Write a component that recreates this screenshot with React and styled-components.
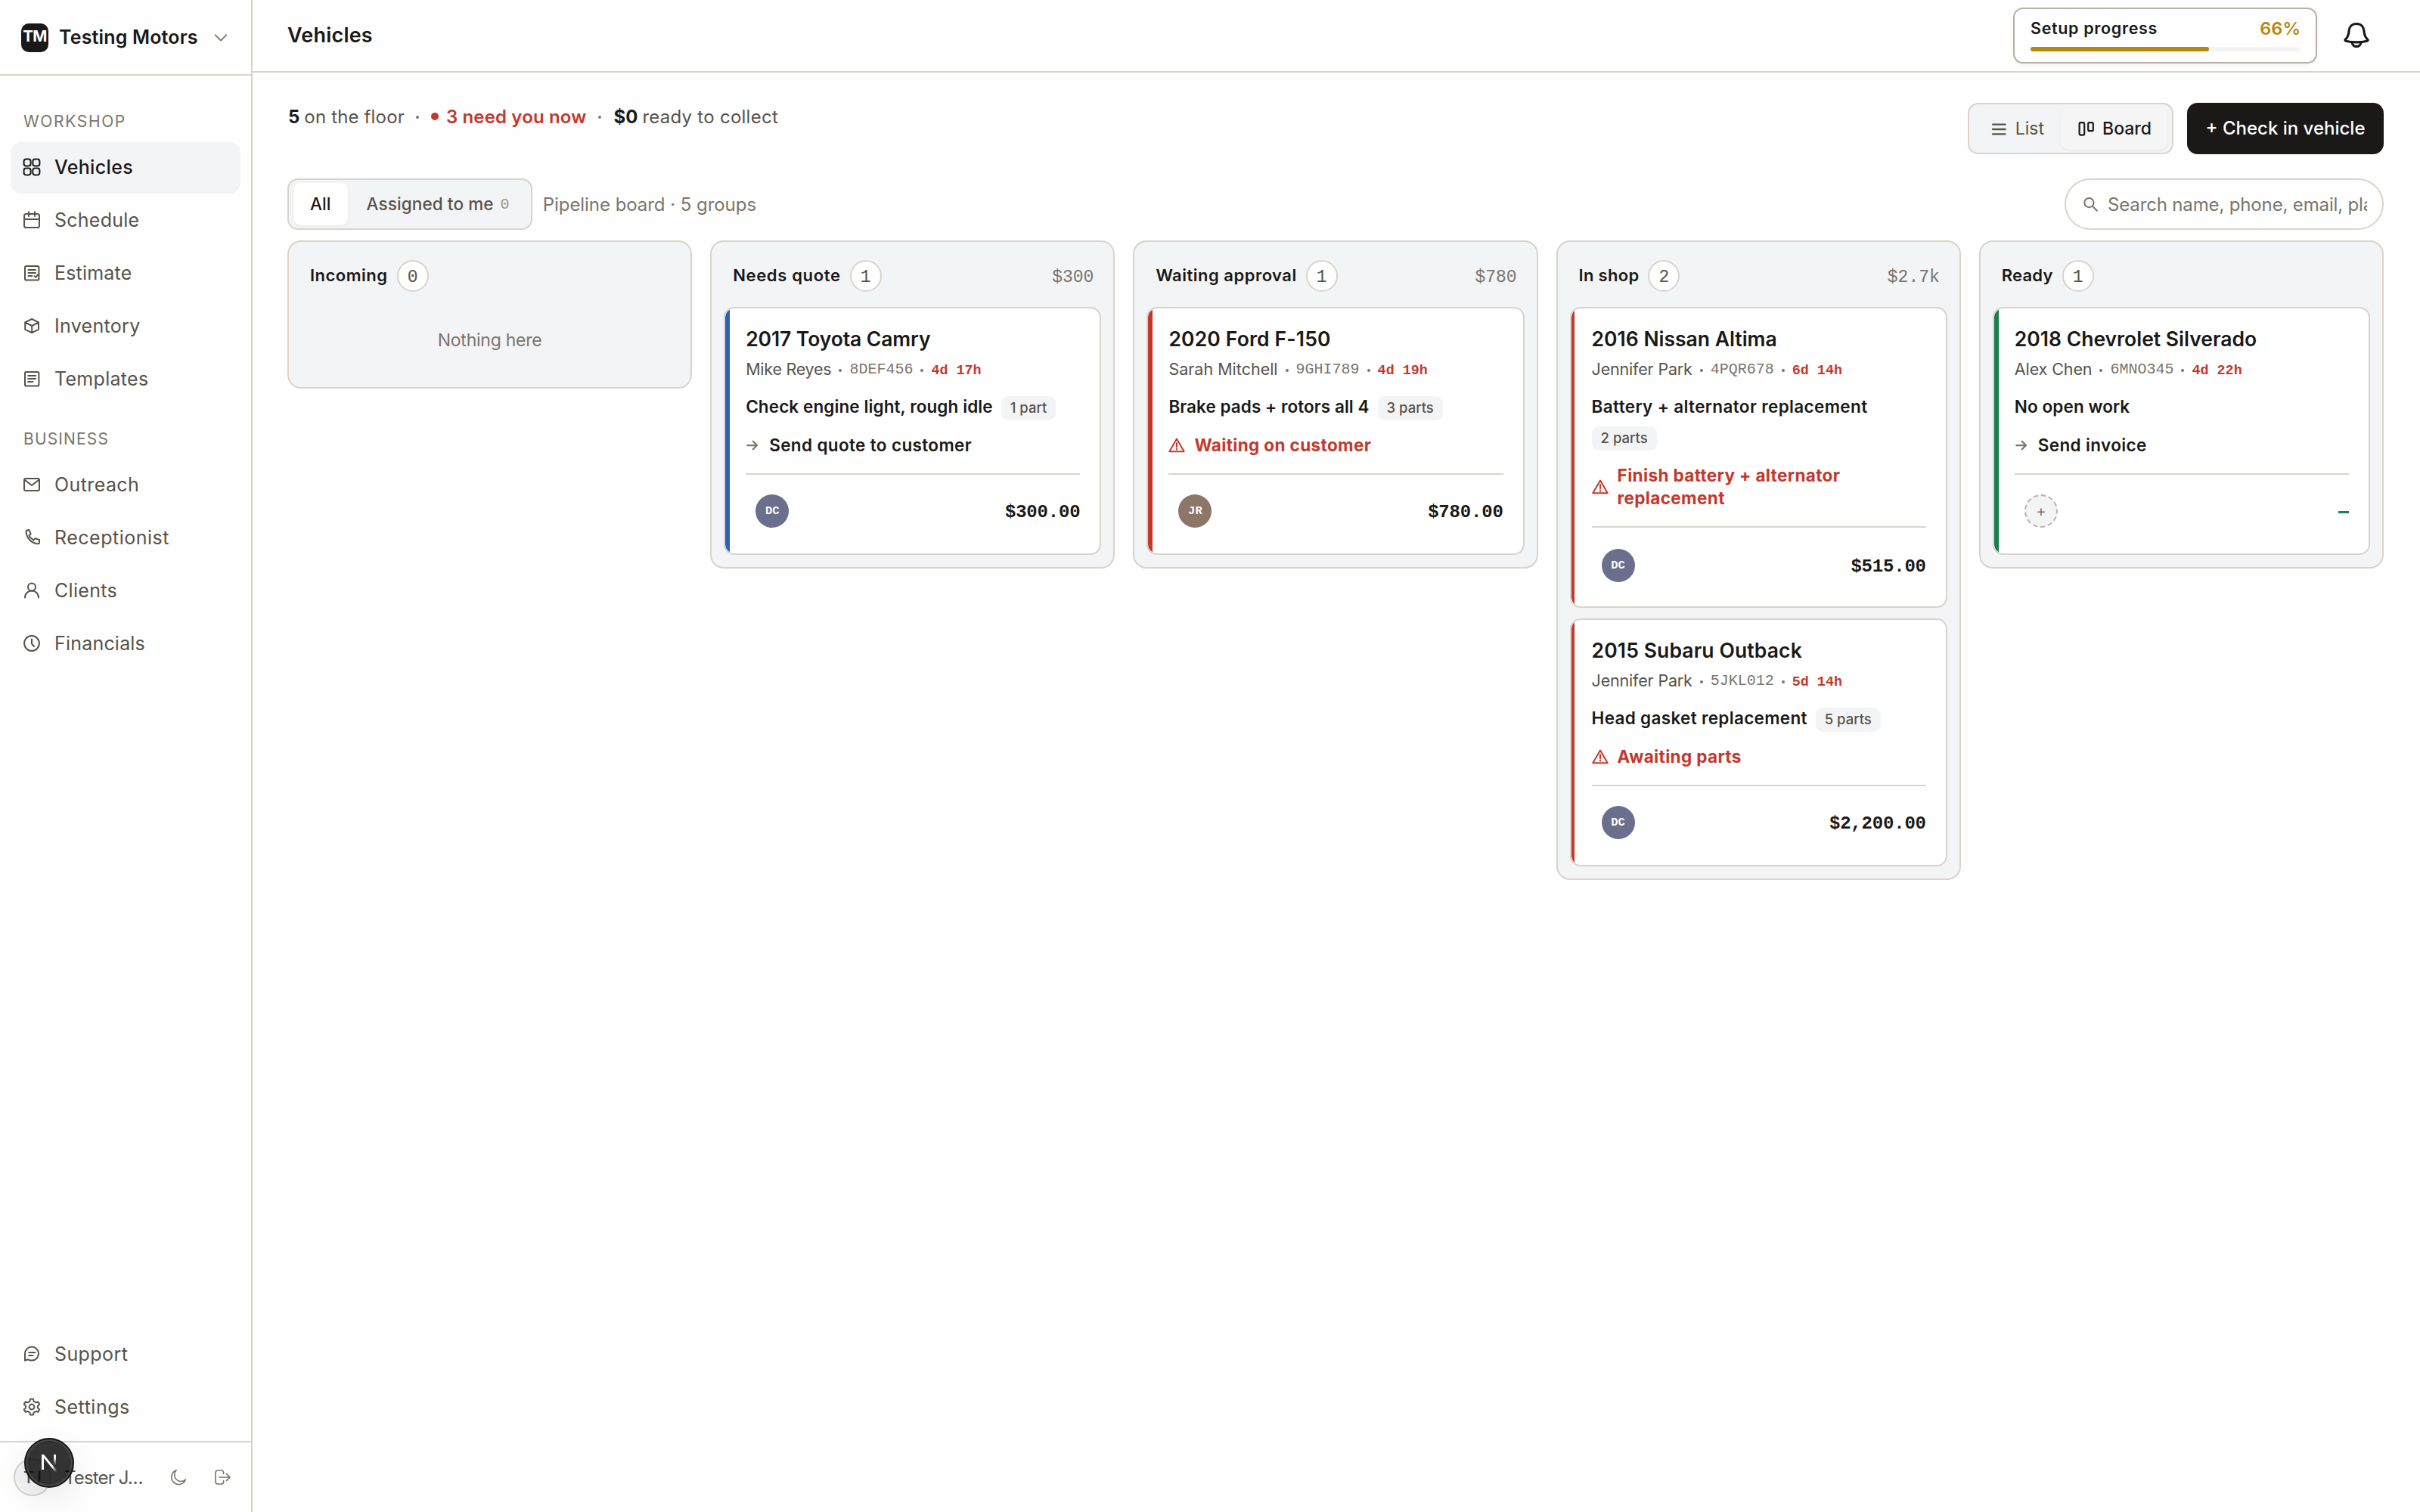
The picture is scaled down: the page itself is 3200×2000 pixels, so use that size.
import React from 'react';
import styled, { createGlobalStyle, css } from 'styled-components';

const mainNav = [
  { label: 'Vehicles', icon: 'grid', active: true, spacing: 0.34 },
  { label: 'Schedule', icon: 'calendar', spacing: 0.25 },
  { label: 'Estimate', icon: 'estimate', spacing: 0.2 },
  { label: 'Inventory', icon: 'box', spacing: 0.3 },
  { label: 'Templates', icon: 'template', spacing: 0.3 },
];

const businessNav = [
  { label: 'Outreach', icon: 'mail', spacing: 0.4 },
  { label: 'Receptionist', icon: 'phone', spacing: 0.5 },
  { label: 'Clients', icon: 'user', spacing: 0.3 },
  { label: 'Financials', icon: 'clock', spacing: 0.2 },
];

const footerNav = [
  { label: 'Support', icon: 'chat', spacing: 0.4 },
  { label: 'Settings', icon: 'gear', spacing: 0.5 },
];

const columns = [
  { title: 'Incoming', count: 0, spacing: 0.5, cards: [] },
  {
    title: 'Needs quote',
    count: 1,
    total: '$300',
    spacing: 0.65,
    cards: [
      {
        name: '2017 Toyota Camry',
        nameSpacing: -0.1,
        owner: 'Mike Reyes',
        ownerSpacing: -0.25,
        plate: '8DEF456',
        age: '4d 17h',
        job: 'Check engine light, rough idle',
        jobSpacing: 0.1,
        parts: '1 part',
        action: 'Send quote to customer',
        initials: 'DC',
        avatar: '#6b6f8d',
        amount: '$300.00',
        bar: '#2962b8',
        barWidth: 6,
      },
    ],
  },
  {
    title: 'Waiting approval',
    count: 1,
    total: '$780',
    spacing: 0.5,
    cards: [
      {
        name: '2020 Ford F-150',
        nameSpacing: 0.15,
        owner: 'Sarah Mitchell',
        ownerSpacing: 0,
        plate: '9GHI789',
        age: '4d 19h',
        job: 'Brake pads + rotors all 4',
        jobSpacing: 0.06,
        parts: '3 parts',
        action: 'Waiting on customer',
        urgent: true,
        initials: 'JR',
        avatar: '#8b7668',
        amount: '$780.00',
        bar: '#c4382c',
        barWidth: 6,
      },
    ],
  },
  {
    title: 'In shop',
    count: 2,
    total: '$2.7k',
    spacing: 0.3,
    cards: [
      {
        name: '2016 Nissan Altima',
        nameSpacing: 0,
        owner: 'Jennifer Park',
        ownerSpacing: -0.18,
        plate: '4PQR678',
        age: '6d 14h',
        job: 'Battery + alternator replacement',
        jobSpacing: 0.36,
        parts: '2 parts',
        action: 'Finish battery + alternator replacement',
        urgent: true,
        initials: 'DC',
        avatar: '#6b6f8d',
        amount: '$515.00',
        bar: '#c4382c',
        barWidth: 4,
        tall: true,
      },
      {
        name: '2015 Subaru Outback',
        nameSpacing: 0.12,
        owner: 'Jennifer Park',
        ownerSpacing: -0.18,
        plate: '5JKL012',
        age: '5d 14h',
        job: 'Head gasket replacement',
        jobSpacing: 0.32,
        parts: '5 parts',
        action: 'Awaiting parts',
        urgent: true,
        initials: 'DC',
        avatar: '#6b6f8d',
        amount: '$2,200.00',
        bar: '#c4382c',
        barWidth: 4,
      },
    ],
  },
  {
    title: 'Ready',
    count: 1,
    spacing: 0.2,
    cards: [
      {
        name: '2018 Chevrolet Silverado',
        nameSpacing: 0,
        owner: 'Alex Chen',
        ownerSpacing: -0.1,
        plate: '6MNO345',
        age: '4d 22h',
        job: 'No open work',
        jobSpacing: 0.1,
        action: 'Send invoice',
        bar: '#1a7f4e',
        barWidth: 6,
      },
    ],
  },
];

const icons = {
  grid: (
    <>
      <rect x='1.6' y='1.6' width='9' height='9' rx='2.8' />
      <rect x='13.4' y='1.6' width='9' height='9' rx='2.8' />
      <rect x='1.6' y='13.4' width='9' height='9' rx='2.8' />
      <rect x='13.4' y='13.4' width='9' height='9' rx='2.8' />
    </>
  ),
  calendar: (
    <>
      <rect x='2' y='4' width='20' height='18' rx='2.6' />
      <path d='M2 11H22M8 1.2V7M16 1.2V7' />
    </>
  ),
  estimate: (
    <>
      <rect x='3' y='3' width='18.4' height='18.6' rx='1.8' />
      <path d='M7.5 8H17M7.5 12H17M7.5 16H12.5M15.6 16.2L17.2 17.6L20.5 14' />
    </>
  ),
  template: (
    <>
      <rect x='3' y='3' width='18.4' height='18.6' rx='1.8' />
      <path d='M7.2 8H17.2M7.2 12H17.2M7.2 16H13.5' />
    </>
  ),
  box: <path d='M12.2 3L21 7.4V16.8L12.2 21.2L3.2 16.8V7.4ZM3.2 7.4L12.2 12L21 7.4M12.2 12V21' />,
  mail: (
    <>
      <rect x='2' y='4' width='20' height='16' rx='2' />
      <path d='M3 6L12 13L21 6' />
    </>
  ),
  phone: (
    <path d='M5 2.6L8.6 2L10.6 7.4L8.4 9.4C9.6 12 11.6 14 14.4 15.4L16.6 13.2L22 15V18.4C22 20 20.6 20.6 19 20.2C11.4 19 5.6 13 4.6 5.4Z' />
  ),
  user: (
    <>
      <circle cx='12' cy='7.6' r='5' />
      <path d='M3 21.4C3 16 7 12.6 12 12.6C17 12.6 21 16 21 21.4' />
    </>
  ),
  clock: (
    <>
      <circle cx='12' cy='12' r='9.9' />
      <path d='M12 6.6V12.4L15 16' />
    </>
  ),
  chat: (
    <>
      <path d='M3 20.6V11.6A9 9 0 1 1 12 20.6C9.6 20.6 8 20 6.6 19.2L3 20.6Z' />
      <path d='M8.2 10H16.4M8.2 14H13.6' />
    </>
  ),
  gear: (
    <>
      <circle cx='12' cy='12' r='3.4' />
      <path d='M10.1 1.6H13.9L14.6 4.6L17.4 6.2L20.3 5.2L22.2 8.5L20 10.6V13.4L22.2 15.5L20.3 18.8L17.4 17.8L14.6 19.4L13.9 22.4H10.1L9.4 19.4L6.6 17.8L3.7 18.8L1.8 15.5L4 13.4V10.6L1.8 8.5L3.7 5.2L6.6 6.2L9.4 4.6Z' />
    </>
  ),
  chevron: <path d='M4 8L12 16L20 8' />,
  moon: <path d='M9.2 2.8A9.6 9.6 0 1 0 21.4 15A8.6 8.6 0 0 1 9.2 2.8Z' />,
  logout: (
    <path d='M13.6 7.4V6C13.6 4 12.6 3 10.6 3H6C4 3 3 4 3 6V18C3 20 4 21 6 21H10.6C12.6 21 13.6 20 13.6 18V16.6M8 12H22M17.6 7.6L22 12L17.6 16.4' />
  ),
  bell: (
    <>
      <path d='M17 2.5C11 2.5 7.4 6.4 7 12C6.7 17 6 20 2.2 23.4C1.6 24 2 25 3 25.2C11 27.4 23 27.4 31 25.2C32 25 32.4 24 31.8 23.4C28 20 27.3 17 27 12C26.6 6.4 23 2.5 17 2.5Z' />
      <path d='M11.2 27.4C11.8 34.4 22.2 34.4 22.8 27.4' />
    </>
  ),
  list: <path d='M4 6.6H20.6M4 13H20.6M4 19.4H20.6' />,
  board: (
    <>
      <rect x='2.6' y='4.2' width='6.6' height='16.4' rx='1.8' />
      <rect x='14.2' y='4.2' width='6.6' height='11' rx='1.8' />
    </>
  ),
  search: (
    <>
      <circle cx='9.6' cy='9.2' r='7' />
      <path d='M14.8 14.4L21.6 21.4' />
    </>
  ),
  arrow: <path d='M3 12H20M13 5L20 12L13 19' />,
  warning: (
    <>
      <path d='M12 2.8L22.6 21H1.4Z' />
      <path d='M12 8.8V14.4M12 16.8V18' />
    </>
  ),
};

const Icon = ({ name, size = 24, stroke = 2, box = 24 }) => (
  <Svg
    width={size}
    height={size}
    viewBox={`0 0 ${box} ${box}`}
    fill='none'
    stroke='currentColor'
    strokeWidth={stroke}
    strokeLinecap='round'
    strokeLinejoin='round'
  >
    {icons[name]}
  </Svg>
);

const NavList = ({ items }) => (
  <Nav>
    {items.map((item) => (
      <NavItem key={item.label} $active={item.active} $spacing={item.spacing}>
        <Icon name={item.icon} />
        {item.label}
      </NavItem>
    ))}
  </Nav>
);

const VehicleCard = ({ card }) => (
  <Card $bar={card.bar} $barWidth={card.barWidth}>
    <CardTitle $spacing={card.nameSpacing}>{card.name}</CardTitle>
    <Meta>
      <Owner $spacing={card.ownerSpacing}>{card.owner}</Owner>
      <Dot />
      <Plate>{card.plate}</Plate>
      <Dot />
      <Age>{card.age}</Age>
    </Meta>
    <Job>
      <JobName $spacing={card.jobSpacing}>{card.job}</JobName>
      {card.parts && <Tag>{card.parts}</Tag>}
    </Job>
    <Action $urgent={card.urgent}>
      {card.urgent ? <Icon name='warning' size={22} stroke={2.2} /> : <Icon name='arrow' size={18} stroke={3} />}
      <span>{card.action}</span>
    </Action>
    <CardFoot $tall={card.tall}>
      {card.initials ? <Avatar $color={card.avatar}>{card.initials}</Avatar> : <EmptyAvatar>+</EmptyAvatar>}
      {card.amount ? <Amount>{card.amount}</Amount> : <NoAmount />}
    </CardFoot>
  </Card>
);

const App = () => {
  return (
    <Page>
      <GlobalStyle />
      <Sidebar>
        <Workspace>
          <Logo>TM</Logo>
          <WorkspaceName>Testing Motors</WorkspaceName>
          <Icon name='chevron' size={22} stroke={2} />
        </Workspace>
        <NavTitle>WORKSHOP</NavTitle>
        <NavList items={mainNav} />
        <NavTitle $second>BUSINESS</NavTitle>
        <NavList items={businessNav} />
        <Spacer />
        <NavList items={footerNav} />
        <UserRow>
          <UserAvatar>TJ</UserAvatar>
          <UserName>Tester J…</UserName>
          <Icon name='moon' size={24} stroke={1.6} />
          <Icon name='logout' size={24} stroke={1.6} />
        </UserRow>
        <DevBadge>
          <svg width='24' height='26' viewBox='0 0 24 26' fill='none'>
            <defs>
              <linearGradient id='diag' x1='0' y1='0' x2='1' y2='1'>
                <stop offset='0.7' stopColor='#fff' />
                <stop offset='1' stopColor='#fff' stopOpacity='0' />
              </linearGradient>
              <linearGradient id='stem' x1='0' y1='0' x2='0' y2='1'>
                <stop offset='0.3' stopColor='#fff' />
                <stop offset='1' stopColor='#fff' stopOpacity='0' />
              </linearGradient>
            </defs>
            <path d='M2 22V2H5L22 23L20 25L5 6.4V22Z' fill='url(#diag)' />
            <rect x='18' y='2' width='3' height='14' fill='url(#stem)' />
          </svg>
        </DevBadge>
      </Sidebar>

      <Main>
        <TopBar>
          <PageTitle>Vehicles</PageTitle>
          <Setup>
            <SetupRow>
              <SetupLabel>Setup progress</SetupLabel>
              <SetupValue>66%</SetupValue>
            </SetupRow>
            <Track>
              <Fill />
            </Track>
          </Setup>
          <Icon name='bell' size={34} box={34} stroke={3.2} />
        </TopBar>

        <Toolbar>
          <Stats>
            <b>5</b>
            <Stat $spacing={0.16}>on the floor</Stat>
            <StatDot />
            <Alert>3 need you now</Alert>
            <StatDot />
            <b>$0</b>
            <Stat $spacing={0.26}>ready to collect</Stat>
          </Stats>
          <Segment>
            <ViewTab>
              <Icon name='list' size={24} stroke={2.3} />
              List
            </ViewTab>
            <ViewTab $active>
              <Icon name='board' size={24} stroke={2.2} />
              Board
            </ViewTab>
          </Segment>
          <CheckIn>+ Check in vehicle</CheckIn>
        </Toolbar>

        <Filters>
          <Segment>
            <FilterTab $active>All</FilterTab>
            <FilterTab>
              Assigned to me <small>0</small>
            </FilterTab>
          </Segment>
          <Summary>Pipeline board · 5 groups</Summary>
          <Search>
            <Icon name='search' size={21} stroke={2.3} />
            <SearchText>Search name, phone, email, plate</SearchText>
          </Search>
        </Filters>

        <Board>
          {columns.map((col) => (
            <Column key={col.title}>
              <ColumnHead>
                <ColumnTitle $spacing={col.spacing}>{col.title}</ColumnTitle>
                <Count>{col.count}</Count>
                {col.total && <Total>{col.total}</Total>}
              </ColumnHead>
              {col.cards.length === 0 && <Empty>Nothing here</Empty>}
              {col.cards.map((card) => (
                <VehicleCard key={card.name} card={card} />
              ))}
            </Column>
          ))}
        </Board>
      </Main>
    </Page>
  );
};

export default App;

const ink = '#1a1917';
const text = '#57534a';
const muted = '#7a756b';
const line = '#d9d4cb';
const soft = '#f3f4f6';
const red = '#c4382c';
const mono = "'Liberation Mono', monospace";

const GlobalStyle = createGlobalStyle`
  * {
    box-sizing: border-box;
  }
  body {
    margin: 0;
    background: #fefefe;
    color: ${ink};
    font-family: 'Inter', sans-serif;
    font-size: 24px;
  }
`;

const spaced = css`
  letter-spacing: ${(p) => p.$spacing || 0}px;
`;

const Svg = styled.svg`
  display: block;
  flex: none;
`;

const Page = styled.div`
  display: flex;
  width: 3200px;
  height: 2000px;
  overflow: hidden;
`;

const Sidebar = styled.aside`
  position: relative;
  display: flex;
  flex-direction: column;
  width: 334px;
  flex: none;
  border-right: 2px solid ${line};
`;

const Workspace = styled.div`
  display: flex;
  align-items: center;
  height: 100px;
  padding: 2px 29px 0 28px;
  border-bottom: 2px solid ${line};
  color: ${muted};
`;

const Logo = styled.div`
  width: 36px;
  height: 38px;
  border-radius: 10px;
  background: ${ink};
  color: #fff;
  font-size: 20.5px;
  font-weight: 700;
  line-height: 34px;
  letter-spacing: -0.6px;
  text-align: center;
`;

const WorkspaceName = styled.div`
  flex: 1;
  margin: -2px 0 0 14px;
  color: ${ink};
  font-size: 25px;
  font-weight: 600;
  letter-spacing: 0.16px;
`;

const NavTitle = styled.div`
  height: 26px;
  margin: ${(p) => (p.$second ? '32px' : '48px')} 0 14px 31px;
  color: ${muted};
  font-size: 21px;
  line-height: 26px;
  letter-spacing: ${(p) => (p.$second ? 1.15 : 1.65)}px;
`;

const Nav = styled.nav`
  display: flex;
  flex-direction: column;
  gap: 2px;
  padding: 0 14px;
`;

const NavItem = styled.a`
  display: flex;
  align-items: center;
  gap: 18px;
  height: 68px;
  padding: 0 16px 2px;
  border-radius: 14px;
  background: ${(p) => (p.$active ? soft : 'transparent')};
  color: ${(p) => (p.$active ? ink : text)};
  font-size: 25px;
  font-weight: ${(p) => (p.$active ? 500 : 400)};
  ${spaced}
`;

const Spacer = styled.div`
  flex: 1;
`;

const UserRow = styled.div`
  display: flex;
  align-items: center;
  height: 94px;
  margin-top: 10px;
  padding: 0 26px 0 18px;
  border-top: 2px solid ${line};
  color: ${muted};

  svg + svg {
    margin-left: 34px;
  }
`;

const UserAvatar = styled.div`
  display: flex;
  align-items: center;
  justify-content: center;
  width: 50px;
  height: 50px;
  border: 2px solid ${line};
  border-radius: 50%;
  background: ${soft};
  color: ${text};
  font-size: 21px;
  font-weight: 500;
`;

const UserName = styled.div`
  flex: 1;
  margin-left: 17px;
  color: ${text};
  font-size: 24px;
  white-space: nowrap;
  letter-spacing: -0.85px;
`;

/* floats over the user row */
const DevBadge = styled.div`
  position: absolute;
  left: 32px;
  bottom: 32px;
  display: flex;
  align-items: center;
  justify-content: center;
  width: 66px;
  height: 66px;
  border: 2px solid #171717;
  border-radius: 50%;
  background: rgba(0, 0, 0, 0.8);
  box-shadow: inset 0 0 0 2px #4a4a4a, 0 16px 48px -8px rgba(0, 0, 0, 0.14);
`;

const Main = styled.main`
  flex: 1;
  min-width: 0;
`;

const TopBar = styled.header`
  display: flex;
  align-items: center;
  height: 96px;
  padding: 0 67px 2px 46px;
  border-bottom: 2px solid ${line};
`;

const PageTitle = styled.h1`
  flex: 1;
  margin: 0;
  font-size: 27px;
  font-weight: 600;
  letter-spacing: 0.2px;
`;

const Setup = styled.div`
  width: 402px;
  height: 74px;
  margin: 2px 35px 0 0;
  padding: 12px 20px 0 21px;
  border: 2px solid #b8b0a4;
  border-radius: 13px;
  background: #fff;
  box-shadow: 0 2px 4px rgba(0, 0, 0, 0.05);
`;

const SetupRow = styled.div`
  display: flex;
  justify-content: space-between;
  align-items: center;
  height: 26px;
  margin-bottom: 12px;
`;

const SetupLabel = styled.span`
  font-size: 21.5px;
  font-weight: 600;
  letter-spacing: 0.66px;
`;

const SetupValue = styled.span`
  color: #b8860b;
  font-size: 23.5px;
  font-weight: 600;
`;

const Track = styled.div`
  height: 6px;
  border-radius: 3px;
  background: ${soft};
`;

const Fill = styled.div`
  width: 66%;
  height: 6px;
  border-radius: 3px;
  background: #b8860b;
`;

const Toolbar = styled.div`
  display: flex;
  height: 68px;
  margin: 40px 48px 32px 46px;
`;

const Stats = styled.div`
  display: flex;
  flex: 1;
  align-items: center;
  height: 36px;

  b {
    margin: 0 6px 0 1px;
    font-weight: 700;
  }
`;

const Stat = styled.span`
  color: ${text};
  ${spaced}
`;

const StatDot = styled.i`
  width: 4px;
  height: 4px;
  margin: 2px 15.5px 0;
  border-radius: 50%;
  background: ${muted};
`;

const Alert = styled.span`
  display: flex;
  align-items: center;
  gap: 10px;
  color: ${red};
  font-weight: 600;
  letter-spacing: 0.15px;

  &::before {
    content: '';
    width: 10px;
    height: 10px;
    border-radius: 50%;
    background: ${red};
  }
`;

const Segment = styled.div`
  display: flex;
  height: 68px;
  padding: 4px 6px;
  border: 2px solid ${line};
  border-radius: 14px;
  background: ${soft};
`;

const ViewTab = styled.div`
  display: flex;
  align-items: center;
  gap: ${(p) => (p.$active ? 9 : 10)}px;
  height: 56px;
  padding: ${(p) => (p.$active ? '0 21px 0 22px' : '0 22px 0 21px')};
  border-radius: 10px;
  background: ${(p) => (p.$active ? '#f5f5f5' : 'transparent')};
  box-shadow: ${(p) => (p.$active ? '0 1px 3px rgba(0, 0, 0, 0.05)' : 'none')};
  color: ${(p) => (p.$active ? ink : text)};
  font-size: 23px;
  font-weight: ${(p) => (p.$active ? 500 : 400)};
`;

const CheckIn = styled.div`
  width: 260px;
  height: 68px;
  margin-left: 18px;
  border-radius: 14px;
  background: ${ink};
  color: #fff;
  font-size: 24px;
  font-weight: 500;
  line-height: 68px;
  text-align: center;
`;

const Filters = styled.div`
  display: flex;
  align-items: center;
  margin: 0 48px 14px 46px;
`;

const FilterTab = styled.div`
  display: flex;
  align-items: center;
  height: 56px;
  padding: ${(p) => (p.$active ? '0 22px 2px' : '0 22px 2px 25px')};
  border-radius: 10px;
  background: ${(p) => (p.$active ? '#fff' : 'transparent')};
  box-shadow: ${(p) => (p.$active ? '0 1px 3px rgba(0, 0, 0, 0.06)' : 'none')};
  color: ${(p) => (p.$active ? ink : text)};
  font-size: 22.5px;
  font-weight: 500;
  letter-spacing: 0.1px;

  small {
    margin: 3px 0 0 9px;
    color: #9a958b;
    font: 400 20px ${mono};
  }
`;

const Summary = styled.span`
  flex: 1;
  margin-left: 14px;
  color: ${muted};
  letter-spacing: -0.05px;
`;

const Search = styled.div`
  display: flex;
  align-items: center;
  width: 422px;
  height: 68px;
  padding: 0 20px 0 22px;
  border: 2px solid ${line};
  border-radius: 34px;
  color: ${muted};
`;

const SearchText = styled.div`
  flex: 1;
  margin-left: 12px;
  overflow: hidden;
  white-space: nowrap;
  letter-spacing: -0.15px;
`;

const Board = styled.div`
  display: grid;
  grid-template-columns: repeat(5, 1fr);
  align-items: start;
  gap: 24px;
  margin: 0 48px 0 46px;
`;

const Column = styled.section`
  display: flex;
  flex-direction: column;
  gap: 14px;
  padding: 16px;
  border: 2px solid ${line};
  border-radius: 18px;
  background: ${soft};
`;

const ColumnHead = styled.div`
  display: flex;
  align-items: center;
  height: 56px;
  padding: 2px 10px 0 12px;
`;

const ColumnTitle = styled.h2`
  margin: 0;
  padding-bottom: 2px;
  font-size: 22px;
  font-weight: 600;
  ${spaced}
`;

const Count = styled.span`
  width: 42px;
  height: 42px;
  margin-left: 12px;
  border: 2px solid ${line};
  border-radius: 50%;
  background: #fff;
  color: ${text};
  font: 400 23px/42px ${mono};
  text-align: center;
`;

const Total = styled.span`
  margin-left: auto;
  padding-top: 4px;
  color: ${muted};
  font: 400 23px ${mono};
`;

const Empty = styled.div`
  height: 90px;
  padding-top: 27px;
  color: ${muted};
  font-size: 23px;
  line-height: 34px;
  letter-spacing: -0.25px;
  text-align: center;
`;

const Card = styled.article`
  padding: 24px 26px 0 27px;
  border: 2px solid ${line};
  border-radius: 14px;
  background: linear-gradient(
    to right,
    ${(p) => p.$bar} ${(p) => p.$barWidth}px,
    #fff ${(p) => p.$barWidth}px
  );
  background-origin: padding-box;
  background-clip: padding-box;
`;

const CardTitle = styled.h3`
  height: 36px;
  margin: 0;
  font-size: 26.5px;
  font-weight: 600;
  line-height: 33px;
  ${spaced}
`;

const Meta = styled.div`
  display: flex;
  align-items: center;
  height: 28px;
  margin-top: 6px;
`;

const Owner = styled.span`
  color: ${text};
  font-size: 21.5px;
  ${spaced}
`;

const Dot = styled.i`
  width: 4px;
  height: 4px;
  margin: 4px 10px 0;
  border-radius: 50%;
  background: ${muted};
`;

const Plate = styled.span`
  color: ${muted};
  font: 400 20px ${mono};
`;

const Age = styled.span`
  padding-top: 4px;
  color: ${red};
  font: 700 18.4px ${mono};
`;

const Job = styled.div`
  display: flex;
  flex-wrap: wrap;
  gap: 8px 11px;
  margin-top: 22px;
`;

const JobName = styled.span`
  height: 32px;
  font-size: 22.5px;
  font-weight: 600;
  line-height: 28px;
  ${spaced}
`;

const Tag = styled.span`
  height: 32px;
  padding: 0 12px;
  border-radius: 9px;
  background: ${soft};
  color: ${text};
  font-size: 18.5px;
  font-weight: 500;
  line-height: 31px;
`;

const Action = styled.div`
  display: flex;
  align-items: center;
  gap: ${(p) => (p.$urgent ? 12 : 13)}px;
  margin-top: 18px;
  color: ${(p) => (p.$urgent ? red : muted)};
  font-size: 22.5px;
  font-weight: ${(p) => (p.$urgent ? 700 : 600)};
  line-height: 30px;
  letter-spacing: 0.36px;

  span {
    flex: 1;
    color: ${(p) => (p.$urgent ? red : ink)};
  }
`;

const CardFoot = styled.div`
  display: flex;
  align-items: flex-start;
  justify-content: space-between;
  height: 106px;
  margin-top: 22px;
  padding: ${(p) => (p.$tall ? 28 : 26)}px 0 0 13px;
  border-top: 2px solid ${line};
`;

const Avatar = styled.div`
  width: 44px;
  height: 44px;
  border-radius: 50%;
  background: ${(p) => p.$color};
  color: #fff;
  font: 700 15.5px/45px ${mono};
  text-align: center;
`;

const EmptyAvatar = styled(Avatar)`
  border: 2px dashed #b8b0a4;
  background: ${soft};
  color: ${muted};
  font: 400 20px/40px 'Inter', sans-serif;
`;

const Amount = styled.span`
  font: 700 24px/47px ${mono};
  letter-spacing: -0.2px;
`;

const NoAmount = styled.span`
  width: 14px;
  height: 3px;
  margin-top: 22px;
  background: #1a7f4e;
`;
